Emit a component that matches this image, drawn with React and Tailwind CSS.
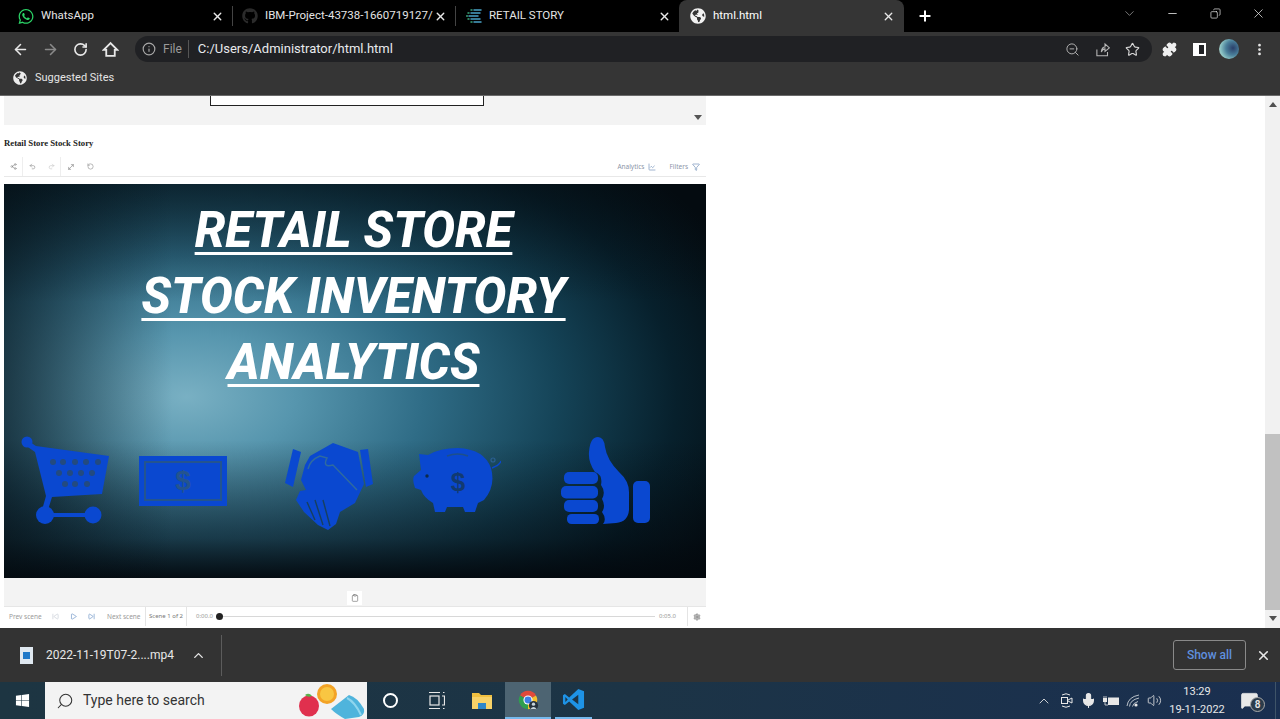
import React from 'react';
import {
  ArrowLeft, ArrowRight, RotateCw, Info, ZoomOut, Star, Puzzle, EllipsisVertical, X, Plus, ChevronDown, ChevronUp,
  Minus, Copy, Share2, Undo2, Redo2, MoveDiagonal, RotateCcw, ChartLine, Funnel, SkipBack, SkipForward, Play,
  Settings, Search, Mic, Volume2, MessageSquare, Clipboard,
} from 'lucide-react';
import { FaWhatsapp, FaGithub, FaGlobeAmericas, FaWindows } from 'react-icons/fa';

const BLUE = '#0a48d0';

function CartIcon() {
  return (
    <svg width="90" height="88" viewBox="20 436 90 88" fill={BLUE}>
      <circle cx="27" cy="442" r="5.5" />
      <path d="M27 440 L36 446 L109 456 L102 494 L52 497 L48 510 L42 510 L46 496 L35 452 L25 445 Z" />
      <circle cx="45" cy="515" r="9" />
      <circle cx="93" cy="515" r="8.5" />
      <rect x="45" y="513" width="48" height="4" />
      <g fill="#234a80">
        {[53, 63, 75, 86, 98].map((x) => <circle key={x} cx={x} cy="462" r="3" />)}
        {[59, 70, 81, 92].map((x) => <circle key={x} cx={x} cy="473" r="3" />)}
        {[65, 75, 87].map((x) => <circle key={x} cx={x} cy="484" r="3" />)}
      </g>
    </svg>
  );
}

function MoneyIcon() {
  return (
    <div className="flex h-[50px] w-[88px] items-center justify-center bg-[#0a48d0] p-[5px]">
      <div className="flex h-full w-full items-center justify-center border-2 border-[#24548f] font-['Liberation_Sans',sans-serif] text-[28px] font-bold text-[#24548f]">
        $
      </div>
    </div>
  );
}

function HandshakeIcon() {
  return (
    <svg width="88" height="88" viewBox="285 443 88 88" fill={BLUE}>
      <path d="M293 449 L301 452 L293 487 L285 483 Z" />
      <path d="M360 450 L368 449 L373 484 L366 487 Z" />
      <path d="M310 456 L333 443 L358 452 L364 484 L355 503 L340 512 L336 524 L328 530 L318 525 L304 512 L296 500 L300 491 L306 490 L301 480 L305 465 Z" />
      <path d="M308 469 Q310 460 320 456 L327 458 Q322 468 333 465 L357 490" fill="none" stroke="#2f6aa0" strokeWidth="1.5" />
      <path d="M307 502 L315 520 M315 500 L323 525 M323 500 L330 526" stroke="#17405f" strokeWidth="1.4" />
    </svg>
  );
}

function PiggyIcon() {
  return (
    <svg width="88" height="65" viewBox="413 448 88 65" fill={BLUE}>
      <path d="M419 454 L428 455 Q440 448 458 448 Q484 449 491 468 Q496 486 484 500 L478 503 L475 512 L465 512 L463 507 L447 507 L445 512 L435 512 L433 503 Q424 498 421 490 L415 488 Q412 480 414 476 L421 470 Z" />
      <path d="M447 456 Q458 452 468 456" fill="none" stroke="#1e4f8a" strokeWidth="1.6" />
      <circle cx="427" cy="476" r="1.7" fill="#0d2a4a" />
      <path d="M492 468 Q500 465 501 461" fill="none" stroke={BLUE} strokeWidth="1.4" />
      <circle cx="493" cy="460" r="2" fill="none" stroke="#2b5f92" strokeWidth="1.2" />
      <text x="458" y="491" textAnchor="middle" fontSize="26" fontWeight="700" fontFamily="Liberation Sans" fill="#123a70">$</text>
    </svg>
  );
}

function ThumbIcon() {
  return (
    <svg width="90" height="88" viewBox="560 436 90 88" fill={BLUE}>
      <rect x="563" y="472" width="34" height="12" rx="5" />
      <rect x="560" y="486" width="37" height="12.5" rx="5" />
      <rect x="563" y="500" width="34" height="12" rx="5" />
      <rect x="566" y="514" width="32" height="10" rx="4.5" />
      <path d="M588 452 Q589 437 597 437 Q603 437 604 447 Q606 460 618 472 Q628 481 628 492 L628 510 Q627 522 615 523 L602 524 Q606 519 601 512 Q605 506 601 499 Q605 492 600 485 Q602 475 594 472 Q587 462 588 452 Z" />
      <rect x="632" y="481" width="17" height="42" rx="5" />
    </svg>
  );
}

function ChromeLogo() {
  return (
    <svg width="22" height="22" viewBox="0 0 24 24">
      <path d="M12 12 L3.3 7 A10 10 0 0 1 20.7 7 Z" fill="#e04a3b" />
      <path d="M12 12 L3.3 7 A10 10 0 0 0 12 22 Z" fill="#2f9e4f" />
      <path d="M12 12 L12 22 A10 10 0 0 0 20.7 7 Z" fill="#f5c02e" />
      <circle cx="12" cy="12" r="5" fill="#fff" />
      <circle cx="12" cy="12" r="3.8" fill="#3f7fe6" />
      <circle cx="18" cy="18" r="5" fill="#26323d" />
      <circle cx="18" cy="16.5" r="1.8" fill="#c8d4dc" />
      <path d="M14.5 22 Q18 17.5 21.5 22 Z" fill="#c8d4dc" />
    </svg>
  );
}

function VsCodeLogo() {
  return (
    <svg width="23" height="23" viewBox="0 0 24 24">
      <path fillRule="evenodd" fill="#1e93e6" d="M17 1 L7.5 10 L3 6.3 L1 7.5 V16.5 L3 17.7 L7.5 14 L17 23 L23 20.5 V3.5 Z M17 7 L10.5 12 L17 17 Z M3.5 9.3 L6 12 L3.5 14.7 Z" />
    </svg>
  );
}

function RetailFavicon() {
  return (
    <svg width="16" height="16" viewBox="0 0 16 16" strokeWidth="1.5" strokeLinecap="round">
      <path d="M8 2 H15 M5 5 H14 M3 8 H12 M5 11 H14 M8 14 H15" stroke="#4aa3c7" />
      <path d="M5 2 H6 M2 5 H3 M0.5 8 H1.5 M2 11 H3 M5 14 H6" stroke="#3aa87c" />
    </svg>
  );
}

function SearchArt() {
  return (
    <svg width="70" height="37" viewBox="0 0 70 37">
      <ellipse cx="12" cy="24" rx="10" ry="10.5" fill="#e0304e" />
      <path d="M8 13 Q12 10 15 14 Q11 16 8 13 Z" fill="#59b04a" />
      <g fill="#f3a326">
        <circle cx="30" cy="12" r="10" />
      </g>
      <circle cx="30" cy="12" r="7" fill="#f9c642" />
      <path d="M34 27 L52 13 Q60 15 67 27 Q68 33 62 35 L48 37 Q39 32 34 27 Z" fill="#4fb4dc" />
      <path d="M50 16 Q58 20 64 33" fill="none" stroke="#8fd6ee" strokeWidth="2" />
    </svg>
  );
}

function Tab({ className, icon, label, active }) {
  return (
    <div className={`flex h-full shrink-0 items-center ${className} ${active ? 'rounded-t-lg bg-[#353535] text-white' : 'text-[#e4e4e4]'}`}>
      <span className="flex w-4 shrink-0 justify-center">{icon}</span>
      <span className="ml-[7px] min-w-0 flex-1 whitespace-nowrap text-[11.5px]">{label}</span>
      <X size={13} strokeWidth={2.5} className="ml-1 shrink-0 text-[#e8e8e8]" />
    </div>
  );
}

function ToolbarSlot({ className, children }) {
  return <div className={`flex h-full shrink-0 items-center justify-center ${className}`}>{children}</div>;
}

export default function App() {
  return (
    <div className="flex h-[719px] w-[1280px] flex-col overflow-hidden bg-white font-['Roboto',sans-serif]">
      {/* Tab strip */}
      <div className="flex h-8 shrink-0 items-center bg-black">
        <Tab className="w-[232px] pl-[18px] pr-[8px]" icon={<FaWhatsapp size={17} color="#2bd366" />} label="WhatsApp" />
        <div className="h-5 w-px bg-[#444]" />
        <Tab className="w-[222px] pl-[9px] pr-[8px]" icon={<FaGithub size={16} color="#2b2b2b" />} label="IBM-Project-43738-1660719127/" />
        <div className="h-5 w-px bg-[#444]" />
        <Tab className="w-[223px] pl-[10px] pr-[8px]" icon={<RetailFavicon />} label="RETAIL STORY" />
        <Tab active className="w-[225px] pl-[11px] pr-[9px]" icon={<FaGlobeAmericas size={16} color="#f2f2f2" />} label="html.html" />
        <ToolbarSlot className="w-[42px]"><Plus size={16} strokeWidth={3} className="text-white" /></ToolbarSlot>
        <div className="ml-auto flex h-full items-center pb-[6px] text-[#e8e8e8]">
          <ToolbarSlot className="w-[43px]"><ChevronDown size={15} strokeWidth={1} className="text-[#bdbdbd]" /></ToolbarSlot>
          <ToolbarSlot className="w-[43px]"><Minus size={13} strokeWidth={1.5} /></ToolbarSlot>
          <ToolbarSlot className="w-[43px]"><Copy size={11} strokeWidth={1.5} className="-scale-x-100" /></ToolbarSlot>
          <ToolbarSlot className="w-[43px]"><X size={15} strokeWidth={1.2} /></ToolbarSlot>
        </div>
      </div>

      {/* Address toolbar */}
      <div className="flex h-8 shrink-0 items-center bg-[#353535] pl-[5px] pt-[2px] text-[#e8e8e8]">
        <ToolbarSlot className="w-[30px]"><ArrowLeft size={17} strokeWidth={2.2} /></ToolbarSlot>
        <ToolbarSlot className="w-[30px]"><ArrowRight size={17} strokeWidth={2.2} className="text-[#8a8a8a]" /></ToolbarSlot>
        <ToolbarSlot className="w-[30px]"><RotateCw size={15} strokeWidth={2.6} /></ToolbarSlot>
        <ToolbarSlot className="w-[30px]">
          <svg width="17" height="17" viewBox="0 0 24 24" fill="none" stroke="currentColor" strokeWidth="2.6" strokeLinejoin="miter">
            <path d="M12 3 L2.5 12.5 H6 V21 H18 V12.5 H21.5 Z" />
          </svg>
        </ToolbarSlot>
        <div className="ml-[10px] flex h-[26px] w-[1017px] items-center rounded-full bg-[#202124] pl-[6px]">
          <ToolbarSlot className="w-[15px]"><Info size={14} className="text-[#a8a8a8]" /></ToolbarSlot>
          <span className="ml-[7px] text-xs text-[#9a9a9a]">File</span>
          <div className="ml-[6px] h-[18px] w-px bg-[#555]" />
          <span className="ml-[9px] text-[13px] text-[#e8eaed]">C:/Users/Administrator/html.html</span>
          <div className="ml-auto flex h-full items-center pr-[5px] text-[#b8b8b8]">
            <ToolbarSlot className="w-[30px]"><ZoomOut size={15} strokeWidth={1.5} /></ToolbarSlot>
            <ToolbarSlot className="w-[30px]">
              <svg width="15" height="15" viewBox="0 0 24 24" fill="none" stroke="currentColor" strokeWidth="1.7">
                <path d="M3 12 V22 H20 V16 M10 16 Q11 8 16 8 V3 L23 9.5 L16 15 V11 Q12 11 10 16 Z" />
              </svg>
            </ToolbarSlot>
            <ToolbarSlot className="w-[30px]"><Star size={15} strokeWidth={1.8} className="text-[#d8d8d8]" /></ToolbarSlot>
          </div>
        </div>
        <ToolbarSlot className="ml-[2px] w-[30px]"><Puzzle size={15} fill="currentColor" className="text-[#f0f0f0]" /></ToolbarSlot>
        <ToolbarSlot className="w-[30px]">
          <div className="flex h-[13px] w-[13px] justify-start border-2 border-white bg-white">
            <div className="h-full w-[4px] bg-white" />
            <div className="h-full w-[5px] bg-[#202124]" />
          </div>
        </ToolbarSlot>
        <ToolbarSlot className="w-[30px]">
          <div className="h-[20px] w-[20px] rounded-full bg-[radial-gradient(circle_at_70%_45%,#2a3f6a_0%,#4a7f9a_40%,#8cc4c4_70%,#d0cfc0_100%)]" />
        </ToolbarSlot>
        <ToolbarSlot className="w-[30px]"><EllipsisVertical size={15} strokeWidth={2.4} /></ToolbarSlot>
      </div>

      {/* Bookmarks */}
      <div className="flex h-8 shrink-0 items-center border-b border-[#6a6a6a] bg-[#353535] pb-[3px] pl-[13px] text-[#e4e4e4]">
        <FaGlobeAmericas size={14} color="#ececec" />
        <span className="ml-[8px] text-[11px]">Suggested Sites</span>
      </div>

      {/* Page */}
      <div className="flex min-h-0 flex-1">
        <div className="flex-1 pl-1">
          <div className="w-[702px]">
            <div className="flex h-[29px] bg-[#f3f3f3]">
              <div className="ml-[206px] h-[10px] w-[274px] border border-t-0 border-[#222] bg-white" />
              <div className="ml-auto mr-[4px] mt-[19px] h-0 w-0 border-x-[4px] border-t-[5px] border-x-transparent border-t-[#555]" />
            </div>

            <div className="flex h-8 items-center pt-[6px] font-['Liberation_Serif',serif] text-[8.7px] font-bold text-[#222]">
              Retail Store Stock Story
            </div>

            {/* Story toolbar */}
            <div className="flex h-5 items-center border-b border-[#e8e8e8] text-[#8a8a8a]">
              <ToolbarSlot className="w-[19px] border-r border-[#eeeeee]"><Share2 size={7} /></ToolbarSlot>
              <ToolbarSlot className="w-[19px]"><Undo2 size={7} /></ToolbarSlot>
              <ToolbarSlot className="w-[19px] border-r border-[#eeeeee]"><Redo2 size={7} className="text-[#c4c4c4]" /></ToolbarSlot>
              <ToolbarSlot className="w-5"><MoveDiagonal size={8} /></ToolbarSlot>
              <ToolbarSlot className="w-[18px]"><RotateCcw size={7} /></ToolbarSlot>
              <div className="ml-auto flex items-center pr-[6px] font-['Noto_Sans',sans-serif] text-[6.5px] text-[#8d95a8]">
                <span>Analytics</span>
                <ChartLine size={8} className="ml-[4px] text-[#6f8fb8]" />
                <span className="ml-[13px]">Filters</span>
                <Funnel size={8} className="ml-[4px] text-[#6f8fb8]" />
              </div>
            </div>

            <div className="h-[7px]" />

            {/* Poster */}
            <div className="flex h-[394px] flex-col bg-[linear-gradient(90deg,#040b1099_0%,transparent_24%),linear-gradient(180deg,#040b1090_0%,transparent_30%),linear-gradient(0deg,#03080df0_0%,#03080d80_10%,transparent_35%),radial-gradient(ellipse_85%_90%_at_26%_54%,#79b0c3_0%,#5796ae_18%,#2f6c86_40%,#154458_62%,#07202c_82%,#040b10_100%)] pt-[14px]">
              <div className="flex h-[233px] flex-col items-center pr-[3px] text-[49px] font-extrabold italic text-white">
                {['RETAIL STORE', 'STOCK INVENTORY', 'ANALYTICS'].map((line) => (
                  <div key={line} className="h-[66px] whitespace-nowrap leading-[66px] underline decoration-[3px] underline-offset-[5px] [text-decoration-skip-ink:none]">
                    {line}
                  </div>
                ))}
              </div>
              <div className="mt-[5px] flex h-[88px] items-center pl-[16px]">
                <CartIcon />
                <div className="ml-[29px] mt-[2px]"><MoneyIcon /></div>
                <div className="ml-[58px] mt-[13px]"><HandshakeIcon /></div>
                <div className="ml-[40px]"><PiggyIcon /></div>
                <div className="ml-[60px]"><ThumbIcon /></div>
              </div>
            </div>

            <div className="flex h-7 items-end justify-center bg-[#f3f3f3] pr-[1px]">
              <div className="mb-px flex h-[14px] w-[15px] items-center justify-center bg-white">
                <Clipboard size={8} className="text-[#777]" />
              </div>
            </div>

            {/* Playback bar */}
            <div className="flex h-[22px] items-center border-t border-[#e6e6e6] pb-[2px] font-['Noto_Sans',sans-serif] text-[6.5px] text-[#9a9a9a]">
              <div className="flex h-full w-[42px] items-center pl-[5px]">Prev scene</div>
              <ToolbarSlot className="w-[18px]"><SkipBack size={7} className="text-[#c0c6d0]" /></ToolbarSlot>
              <ToolbarSlot className="w-[18px]"><Play size={7} className="text-[#5a86c0]" /></ToolbarSlot>
              <ToolbarSlot className="w-[19px]"><SkipForward size={7} className="text-[#5a86c0]" /></ToolbarSlot>
              <div className="flex h-full w-[45px] items-center border-r border-[#e4e4e4] pl-[6px]">Next scene</div>
              <div className="flex h-full w-[41px] items-center justify-center whitespace-nowrap border-r border-[#e4e4e4] text-[6px] text-[#777]">Scene 1 of 2</div>
              <div className="w-[28px] pl-[9px] text-[6px]">0:00.0</div>
              <div className="ml-px h-[7px] w-[7px] shrink-0 rounded-full bg-[#222]" />
              <div className="h-px flex-1 bg-[#d8d8d8]" />
              <div className="flex h-full w-[33px] items-center border-r border-[#e4e4e4] pl-[4px] text-[6px]">0:05.0</div>
              <ToolbarSlot className="w-[18px]"><Settings size={8} className="text-[#8a8a8a]" fill="#bbb" /></ToolbarSlot>
            </div>
          </div>
        </div>

        {/* Scrollbar */}
        <div className="flex w-[15px] flex-col items-center bg-[#f1f1f1]">
          <div className="mt-[6px] h-0 w-0 border-x-[4px] border-b-[5px] border-x-transparent border-b-[#505050]" />
          <div className="mt-[327px] h-[176px] w-full bg-[#c1c1c1]" />
          <div className="mt-[6px] h-0 w-0 border-x-[4px] border-t-[5px] border-x-transparent border-t-[#505050]" />
        </div>
      </div>

      {/* Downloads shelf */}
      <div className="flex h-[54px] shrink-0 items-center bg-[#333333] text-[#e8e8e8]">
        <ToolbarSlot className="ml-[18px] w-4">
          <div className="flex h-[17px] w-[13px] items-center justify-center bg-[#dfe8f0]">
            <div className="h-[7px] w-[7px] bg-[#1e78c8]" />
          </div>
        </ToolbarSlot>
        <span className="ml-[12px] w-[129px] whitespace-nowrap text-xs">2022-11-19T07-2....mp4</span>
        <ChevronUp size={15} strokeWidth={2.2} className="ml-[16px]" />
        <div className="ml-[15px] h-[41px] w-px bg-[#5c5c5c]" />
        <div className="ml-auto flex h-[30px] w-[73px] items-center justify-center rounded-[3px] border border-[#8a8a8a] text-xs font-medium text-[#5f8fdf]">
          Show all
        </div>
        <ToolbarSlot className="w-[34px]"><X size={15} strokeWidth={2.6} /></ToolbarSlot>
      </div>

      {/* Taskbar */}
      <div className="flex h-[37px] shrink-0 items-stretch bg-[linear-gradient(90deg,#1d3542_0%,#1c3446_50%,#1a2f50_100%)] text-white">
        <ToolbarSlot className="w-[45px]"><FaWindows size={15} /></ToolbarSlot>
        <div className="flex h-full w-[322px] items-center overflow-hidden bg-[#f3f3f3] pl-[11px] text-[#333]">
          <Search size={18} strokeWidth={1.4} className="-scale-x-100" />
          <span className="ml-[9px] whitespace-nowrap text-[14px]">Type here to search</span>
          <div className="ml-auto"><SearchArt /></div>
        </div>
        <ToolbarSlot className="w-[46px]"><div className="h-[15px] w-[15px] rounded-full border-2 border-white" /></ToolbarSlot>
        <ToolbarSlot className="w-[46px]">
          <svg width="17" height="17" viewBox="0 0 17 17" fill="none" stroke="#e8e8e8" strokeWidth="1.2">
            <path d="M1 0.5 H12 M1 16.5 H12 M15 0.5 H16.5 M15 16.5 H16.5" />
            <rect x="2" y="4" width="9" height="9" />
            <path d="M14 4 H16.5 V13 H14" />
          </svg>
        </ToolbarSlot>
        <ToolbarSlot className="w-[46px]">
          <svg width="22" height="19" viewBox="0 0 22 19">
            <path d="M1 2 H8 L10 4 H21 V18 H1 Z" fill="#f0c040" />
            <rect x="1" y="6" width="20" height="12" fill="#f7d268" />
            <rect x="7" y="12" width="8" height="6" fill="#2d86c9" />
          </svg>
        </ToolbarSlot>
        <ToolbarSlot className="w-[46px] border-b-2 border-[#76b9ed] bg-[#4d6472]"><ChromeLogo /></ToolbarSlot>
        <ToolbarSlot className="ml-[4px] w-[37px] border-b-2 border-[#76b9ed]"><VsCodeLogo /></ToolbarSlot>

        <div className="ml-auto flex h-full items-center text-[#e8e8e8]">
          <ToolbarSlot className="w-[23px]"><ChevronUp size={16} strokeWidth={1.3} /></ToolbarSlot>
          <ToolbarSlot className="w-[22px]">
            <svg width="13" height="17" viewBox="0 0 13 17" fill="none" stroke="#e8e8e8" strokeWidth="1">
              <path d="M2 3 Q6 0.5 10 3 M2 14 Q6 16.5 10 14" />
              <rect x="1.5" y="5.5" width="6" height="6" />
              <path d="M8 8 L12 6 V11 L8 9" />
            </svg>
          </ToolbarSlot>
          <ToolbarSlot className="w-[22px]"><Mic size={17} strokeWidth={1.5} fill="#e8e8e8" /></ToolbarSlot>
          <ToolbarSlot className="w-[23px]">
            <svg width="16" height="12" viewBox="0 0 16 12" fill="#e8e8e8">
              <rect x="5" y="2.5" width="11" height="7.5" />
              <rect x="0" y="3" width="4" height="4" />
              <path d="M1 1 V3 M3 1 V3 M2 7 V10 H5" fill="none" stroke="#e8e8e8" strokeWidth="0.8" />
            </svg>
          </ToolbarSlot>
          <ToolbarSlot className="w-[23px]">
            <svg width="15" height="15" viewBox="0 0 15 15" fill="none" stroke="#b8c0c8" strokeWidth="1">
              <path d="M1 13 Q2 4 13 2 M3.5 13.5 Q4 7 13 5 M6.5 13.5 Q7 10 12 8.5" />
              <circle cx="10" cy="12" r="1.6" fill="#e8e8e8" stroke="none" />
            </svg>
          </ToolbarSlot>
          <ToolbarSlot className="w-[19px]"><Volume2 size={15} strokeWidth={1.3} /></ToolbarSlot>
          <div className="flex h-full w-[66px] flex-col items-center justify-center text-[11px] leading-[18px]">
            <span>13:29</span>
            <span>19-11-2022</span>
          </div>
          <ToolbarSlot className="relative w-[38px]">
            <MessageSquare size={19} fill="#e8e8e8" strokeWidth={1} />
            <span className="absolute left-[20px] top-[15px] flex h-[15px] w-[15px] items-center justify-center rounded-full border border-[#aaa] bg-[#2b3b4a] text-[10px] font-semibold">8</span>
          </ToolbarSlot>
          <div className="ml-[7px] h-full w-[5px] border-l border-[#3f5468]" />
        </div>
      </div>
    </div>
  );
}
